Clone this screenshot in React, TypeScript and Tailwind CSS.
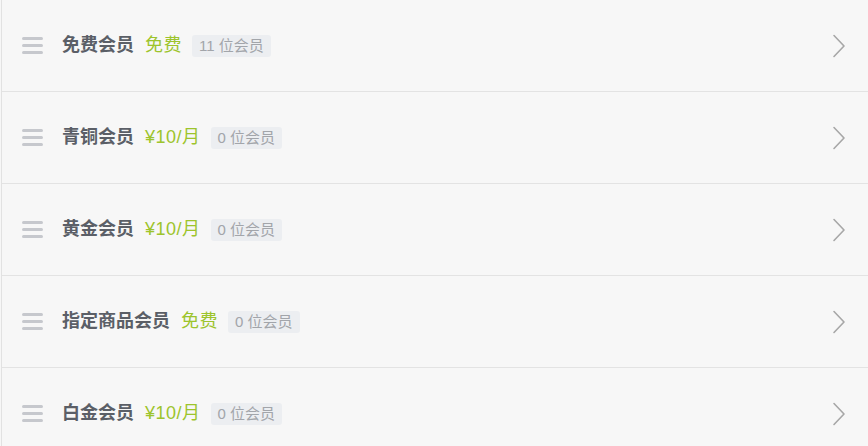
import React from 'react';

interface Level {
  name: string;
  price: string;
  members: number;
}

const LEVELS: Level[] = [
  { name: '免费会员', price: '免费', members: 11 },
  { name: '青铜会员', price: '¥10/月', members: 0 },
  { name: '黄金会员', price: '¥10/月', members: 0 },
  { name: '指定商品会员', price: '免费', members: 0 },
  { name: '白金会员', price: '¥10/月', members: 0 },
];

function DragHandle() {
  return (
    <div className="flex w-[21px] flex-col gap-[4px]" aria-hidden="true">
      <span className="h-[3px] w-full rounded-full bg-[#c6c8cd]" />
      <span className="h-[3px] w-full rounded-full bg-[#c6c8cd]" />
      <span className="h-[3px] w-full rounded-full bg-[#c6c8cd]" />
    </div>
  );
}

function Chevron() {
  return (
    <svg width="14" height="24" viewBox="0 0 14 24" fill="none" aria-hidden="true">
      <path d="M2 1.5 L12 12 L2 22.5" stroke="#a7a7a7" strokeWidth="1.6" strokeLinecap="round" strokeLinejoin="round" />
    </svg>
  );
}

export default function App() {
  return (
    <div
      className="min-h-screen bg-[#f7f7f7]"
      style={{ fontFamily: '"Liberation Sans", "Noto Sans CJK SC", sans-serif' }}
    >
      <ul className="ml-px border-l border-[#e2e2e2]">
        {LEVELS.map((lvl) => (
          <li
            key={lvl.name}
            className="flex h-[92px] items-center border-b border-[#e3e3e3] pl-[20px] pr-[22px]"
          >
            <DragHandle />
            <span className="ml-[19px] text-[18px] font-bold text-[#5b5f67]">{lvl.name}</span>
            <span className="ml-[11px] text-[18px] tracking-[0.5px] text-[#9dc42c]">{lvl.price}</span>
            <span className="ml-[10px] rounded-[3px] bg-[#eceef1] px-[7px] py-[1px] text-[15px] leading-[20px] text-[#a2a5aa]">
              {lvl.members} 位会员
            </span>
            <span className="ml-auto flex items-center">
              <Chevron />
            </span>
          </li>
        ))}
      </ul>
    </div>
  );
}
